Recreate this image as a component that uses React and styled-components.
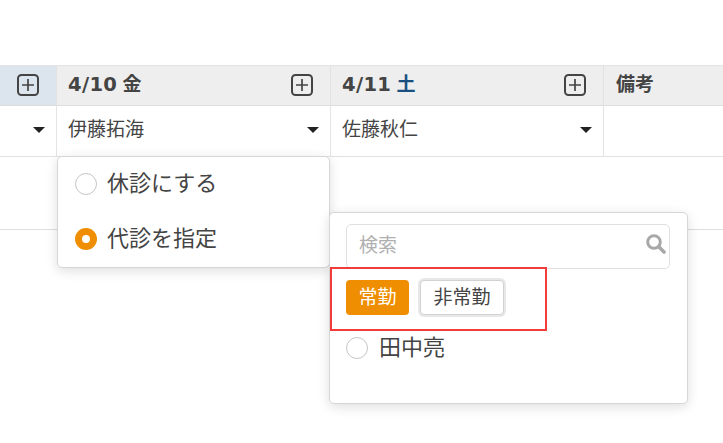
import React from 'react';
import styled, { createGlobalStyle } from 'styled-components';

const Global = createGlobalStyle`
  html, body { margin: 0; padding: 0; background: #fff; }
  body { font-family: "DejaVu Sans", "Noto Sans CJK JP", sans-serif; color: #444; overflow: hidden; }
`;
const Page = styled.div`position: relative; width: 723px; height: 443px; padding-top: 65px; box-sizing: border-box; overflow: hidden;`;
const Sheet = styled.div`display: grid; grid-template-columns: 57px 274px 273px 119px; border-top: 1px solid #e4e4e4;`;
const HeadCell = styled.div`
  height: 40px; box-sizing: border-box; display: flex; align-items: center; justify-content: ${p => p.$iconOnly ? 'flex-end' : 'space-between'};
  padding: 0 16px 0 ${p => p.$last ? 12 : 11}px; background: ${p => p.$today ? '#dce5ee' : '#eeeeee'};
  border-right: ${p => p.$last ? 'none' : '1px solid #e2e2e2'}; border-bottom: 1px solid #dedede;
  font-weight: 700; color: #444;
`;
const Heading = styled.span`line-height: 34px; margin-top: -4px; font-size: 19.5px; letter-spacing: .35px; word-spacing: -2px;`;
const Kanji = styled.span`font-family: "Noto Sans CJK JP", sans-serif; font-size: 19px; letter-spacing: 0; word-spacing: 0; color: ${p => p.$sat ? '#1a4f82' : '#444'};`;
const AddIcon = styled.svg`width: 24px; height: 24px; flex: none; display: block; margin-top: -1px;`;
const BodyCell = styled.div`
  height: 51px; box-sizing: border-box; display: flex; align-items: center; justify-content: ${p => p.$end ? 'flex-end' : 'space-between'};
  padding: 0 11px 8px 11px; border-right: ${p => p.$last ? 'none' : '1px solid #e4e4e4'}; border-bottom: 1px solid #e2e2e2;
  font-family: "Noto Sans CJK JP", sans-serif; font-size: 19px; color: #444;
`;
const Caret = styled.i`width: 0; height: 0; border-style: solid; border-width: 6px 6.5px 0 6.5px; border-color: #222 transparent transparent; margin-top: 6px;`;
const EmptyRow = styled.div`height: 72px; border-bottom: 1px solid #dfdfdf;`;
const Popup = styled.div`
  position: absolute; background: #fff; border-radius: 5px; box-sizing: border-box;
  border: 1px solid #d6d6d6; box-shadow: 0 3px 12px rgba(0,0,0,.13);
  font-family: "Noto Sans CJK JP", sans-serif; color: #444;
`;
const ChoicePopup = styled(Popup)`left: 57px; top: 156px; width: 273px; height: 112px; padding: 0 17px; display: flex; flex-direction: column;`;
const Choice = styled.label`display: flex; align-items: center; gap: 10px; height: 55px; font-size: 22px; line-height: 1; padding-bottom: 8px; box-sizing: border-box;`;
const Radio = styled.span`
  width: 22px; height: 22px; box-sizing: border-box; border-radius: 50%; flex: none;
  border: ${p => p.$on ? '7px solid #ee8e00' : '1.5px solid #c6c6c6'}; background: #fff; margin-top: ${p => p.$offset || 0}px;
`;
const SearchPopup = styled(Popup)`left: 329px; top: 212px; width: 359px; height: 192px; padding: 11px 17px 11px 16px;`;
const SearchBox = styled.div`
  height: 45px; box-sizing: border-box; border: 1px solid #e0e0e0; border-radius: 5px;
  display: flex; align-items: center; justify-content: space-between; padding: 0 3px 6px 12px;
  font-size: 19px; color: #b0b0b0;
`;
const SearchIcon = styled.svg`width: 21px; height: 21px; margin-top: -1px;`;
const Tabs = styled.div`display: flex; gap: 11px; margin-top: 11px; align-items: center;`;
const Tab = styled.button`
  font-family: inherit; font-size: 19px; line-height: 1; box-sizing: border-box; height: 35px; padding: 0 0 4px; white-space: nowrap;
  border-radius: 4px; cursor: pointer;
  ${p => p.$on
    ? 'background:#ee8e00;color:#fff;border:none;width:63px;'
    : 'background:#fff;color:#444;border:1px solid #d2d2d2;box-shadow:0 0 0 2px #e8e8e8;width:84px;'}
`;
const Staff = styled.label`display: flex; align-items: center; gap: 11px; margin-top: 22px; font-size: 22px; line-height: 1;`;
const StaffName = styled.span`margin-top: -6px;`;
const Highlight = styled.div`position: absolute; left: 330px; top: 267px; width: 217px; height: 64px; box-sizing: border-box; border: 2px solid #f23c3c;`;

const Add = () => (
  <AddIcon viewBox="0 0 24 24" fill="none" stroke="#444" strokeWidth="2">
    <rect x="2" y="2" width="20" height="20" rx="3.5" />
    <path d="M12 6v12M6 12h12" strokeWidth="1.7" />
  </AddIcon>
);

export default function App() {
  return (
    <Page>
      <Global />
      <Sheet>
        <HeadCell $today $iconOnly><Add /></HeadCell>
        <HeadCell><Heading>4/10 <Kanji>金</Kanji></Heading><Add /></HeadCell>
        <HeadCell><Heading>4/11 <Kanji $sat>土</Kanji></Heading><Add /></HeadCell>
        <HeadCell $last><Heading><Kanji>備考</Kanji></Heading></HeadCell>
        <BodyCell $end><Caret /></BodyCell>
        <BodyCell>伊藤拓海<Caret /></BodyCell>
        <BodyCell>佐藤秋仁<Caret /></BodyCell>
        <BodyCell $last />
      </Sheet>
      <EmptyRow />
      <ChoicePopup>
        <Choice><Radio $offset={6} />休診にする</Choice>
        <Choice><Radio $on $offset={6} />代診を指定</Choice>
      </ChoicePopup>
      <SearchPopup>
        <SearchBox>検索
          <SearchIcon viewBox="0 0 21 21" fill="none" stroke="#a8a8a8">
            <circle cx="9" cy="9" r="6.3" strokeWidth="3" />
            <path d="M13.8 13.8l5.2 5.2" strokeWidth="3.6" strokeLinecap="round" />
          </SearchIcon>
        </SearchBox>
        <Tabs><Tab $on>常勤</Tab><Tab>非常勤</Tab></Tabs>
        <Staff><Radio /><StaffName>田中亮</StaffName></Staff>
      </SearchPopup>
      <Highlight />
    </Page>
  );
}
